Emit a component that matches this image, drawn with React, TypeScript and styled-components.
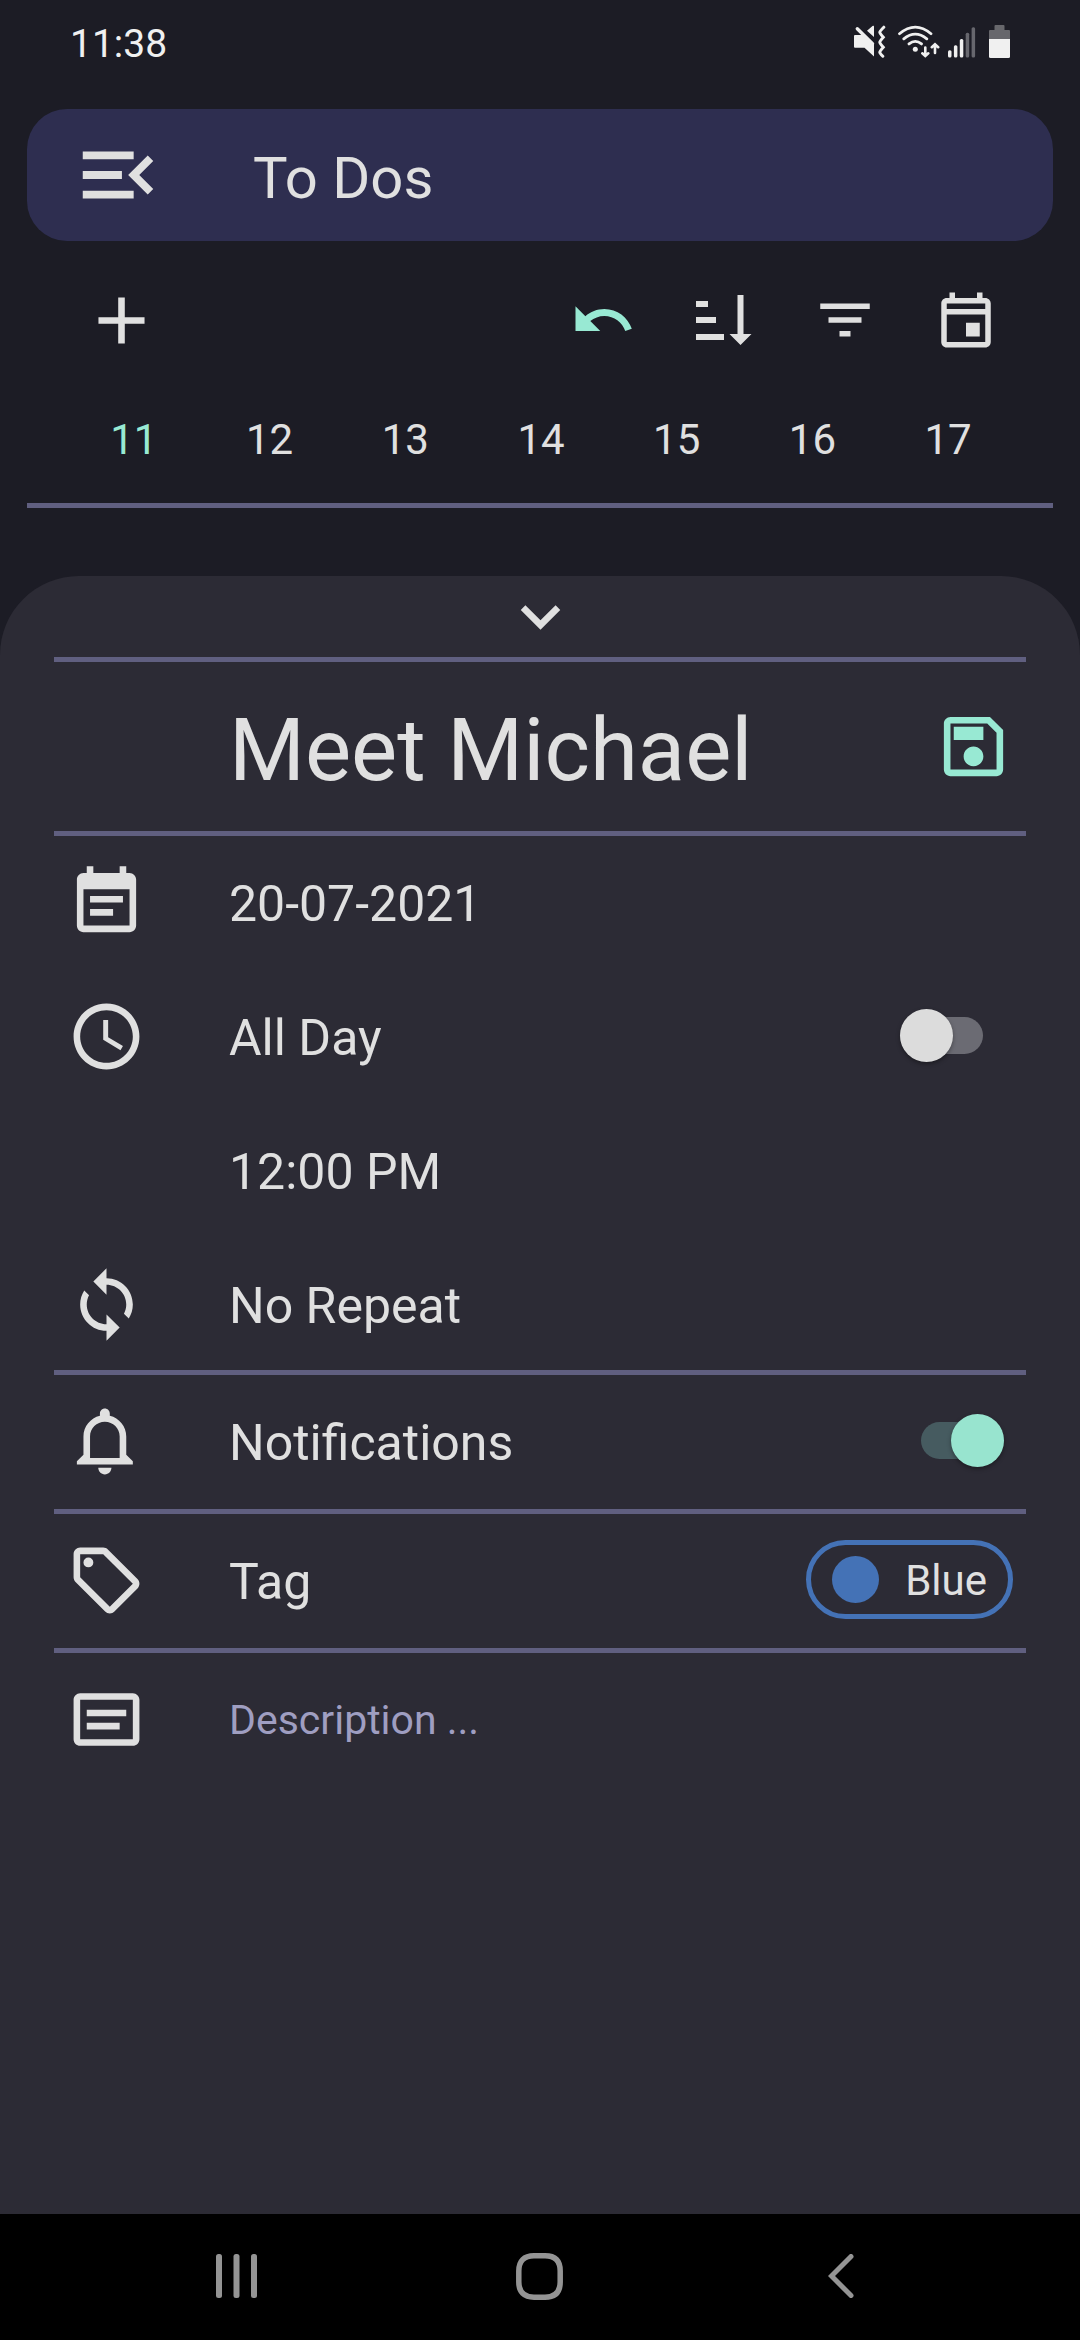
import React, { useState } from "react";
import styled, { createGlobalStyle } from "styled-components";

const color = {
  page: "#1c1c25",
  bar: "#2e2e50",
  sheet: "#2c2b35",
  line: "#605f80",
  text: "#e0e0e0",
  muted: "#9f9ec1",
  accent: "#98e9d3",
  blue: "#4472b6",
  status: "#f0f0f0",
  nav: "#949494",
};

const GlobalStyle = createGlobalStyle`
  *, *::before, *::after { box-sizing: border-box; }
  body {
    margin: 0;
    background: ${color.page};
    color: ${color.text};
    font-family: Roboto, "Noto Sans", sans-serif;
  }
  button, input { font: inherit; color: inherit; }
`;

const Page = styled.div`
  display: flex;
  flex-direction: column;
  min-height: 100vh;
`;

const StatusBar = styled.div`
  display: flex;
  align-items: center;
  justify-content: space-between;
  height: 82px;
  padding: 0 70px;
  color: ${color.status};
`;

const Clock = styled.time`
  padding-top: 6px;
  font-size: 39px;
  line-height: 48px;
`;

const StatusIcons = styled.div`
  display: flex;
  gap: 8px;
`;

const Header = styled.header`
  display: flex;
  align-items: center;
  gap: 88px;
  height: 132px;
  margin: 27px 27px 0;
  padding: 0 44px;
  border-radius: 40px;
  background: ${color.bar};
`;

const HeaderTitle = styled.h1`
  margin: 0;
  padding-top: 6px;
  font-size: 58px;
  font-weight: 400;
  line-height: 68px;
`;

const IconButton = styled.button<{ $accent?: boolean }>`
  display: flex;
  align-items: center;
  justify-content: center;
  padding: 0;
  border: 0;
  background: none;
  color: ${(p) => (p.$accent ? color.accent : color.text)};
  cursor: pointer;
`;

const Toolbar = styled.div`
  display: flex;
  justify-content: space-between;
  height: 158px;
  padding: 0 54px 0 61px;

  ${IconButton} { width: 121px; }
`;

const ToolGroup = styled.div`
  display: flex;
`;

const Days = styled.nav`
  display: grid;
  grid-template-columns: repeat(7, 1fr);
  height: 104px;
  padding: 0 64px 22px 66px;
`;

const Day = styled.button<{ $active: boolean }>`
  padding: 0;
  border: 0;
  background: none;
  color: ${(p) => (p.$active ? color.accent : color.text)};
  font-size: 42px;
  line-height: 50px;
  cursor: pointer;
`;

const Divider = styled.hr<{ $inset: number }>`
  width: auto;
  height: 5px;
  margin: 0 ${(p) => p.$inset}px;
  border: 0;
  background: ${color.line};
`;

const Sheet = styled.main`
  flex: 1;
  margin-top: 68px;
  border-radius: 79px 79px 0 0;
  background: ${color.sheet};
`;

const Collapse = styled(IconButton)`
  width: 100%;
  height: 81px;
`;

const Section = styled.section<{ $end?: number }>`
  display: grid;
  gap: 2px;
  padding: 0 67px ${(p) => p.$end ?? 0}px;
`;

const Row = styled.div<{ $tall?: boolean }>`
  display: grid;
  grid-template-columns: 79px minmax(0, 1fr) auto;
  column-gap: 83px;
  align-items: center;
  height: ${(p) => (p.$tall ? 168 : 132)}px;
`;

const TitleInput = styled.input`
  width: 100%;
  padding: 8px 0 0;
  border: 0;
  outline: 0;
  background: none;
  font-size: 87px;
  line-height: 102px;
`;

const ValueButton = styled.button`
  justify-self: start;
  padding: 3px 0 0;
  border: 0;
  background: none;
  font-size: 50px;
  line-height: 60px;
  cursor: pointer;
`;

const FieldLabel = styled.label`
  padding-top: 4px;
  font-size: 50px;
  line-height: 60px;
`;

const DescriptionInput = styled.input`
  grid-column: 2 / -1;
  width: 100%;
  padding: 2px 0 0;
  border: 0;
  outline: 0;
  background: none;
  font-size: 41px;
  line-height: 50px;

  &::placeholder { color: ${color.muted}; opacity: 1; }
`;

const Switch = styled.input<{ $gap: number }>`
  appearance: none;
  display: grid;
  align-items: center;
  width: 83px;
  height: 53px;
  margin: 0 ${(p) => p.$gap}px 2px 0;
  cursor: pointer;

  &::before, &::after {
    content: "";
    grid-area: 1 / 1;
  }
  &::before {
    height: 37px;
    border-radius: 19px;
    background: #6b6b73;
  }
  &::after {
    width: 53px;
    height: 53px;
    border-radius: 50%;
    background: #dcdcdc;
    box-shadow: 0 2px 4px rgba(0, 0, 0, 0.35);
  }
  &:checked::before { background: #465b60; }
  &:checked::after {
    justify-self: end;
    background: #98e4cf;
  }
`;

const Chip = styled.button`
  display: flex;
  align-items: center;
  gap: 26px;
  height: 79px;
  margin-bottom: 2px;
  padding: 0 21px;
  border: 5px solid ${color.blue};
  border-radius: 40px;
  background: none;
  font-size: 42px;
  line-height: 50px;
  cursor: pointer;
`;

const Dot = styled.span`
  width: 47px;
  height: 47px;
  border-radius: 50%;
  background: ${color.blue};
`;

const ChipText = styled.span`
  padding-top: 3px;
`;

const NavBar = styled.footer`
  display: grid;
  grid-template-columns: repeat(3, 1fr);
  height: 126px;
  padding: 0 88px 2px 86px;
  background: #000;

  ${IconButton} { color: ${color.nav}; }
`;

const paths = {
  menuOpen:
    "M3 18h13v-2H3v2zm0-5h10v-2H3v2zm0-7v2h13V6H3zm18 9.59L17.42 12 21 8.41 19.59 7l-5 5 5 5L21 15.59z",
  add: "M19 13h-6v6h-2v-6H5v-2h6V5h2v6h6v2z",
  undo: "M12.5 8c-2.65 0-5.05.99-6.9 2.6L2 7v9h9l-3.62-3.62c1.39-1.16 3.16-1.88 5.12-1.88 3.54 0 6.55 2.31 7.6 5.5l2.37-.78C21.08 11.03 17.15 8 12.5 8z",
  filter: "M10 18h4v-2h-4v2zM3 6v2h18V6H3zm3 7h12v-2H6v2z",
  calendar:
    "M19 4h-1V2h-2v2H8V2H6v2H5c-1.11 0-1.99.9-1.99 2L3 20c0 1.1.89 2 2 2h14c1.1 0 2-.9 2-2V6c0-1.1-.9-2-2-2zm0 16H5V10h14v10zm0-12H5V6h14v2zm-7 5h5v5h-5z",
  chevronDown: "M16.59 8.59L12 13.17 7.41 8.59 6 10l6 6 6-6z",
  save: "M17 3H5c-1.11 0-2 .9-2 2v14c0 1.1.89 2 2 2h14c1.1 0 2-.9 2-2V7l-4-4zm2 16H5V5h11.17L19 7.83V19zm-7-7c-1.66 0-3 1.34-3 3s1.34 3 3 3 3-1.34 3-3-1.34-3-3-3zM6 6h9v4H6V6z",
  eventNote:
    "M14 14H7v2h7v-2zm5-11h-1V1h-2v2H8V1H6v2H5c-1.11 0-1.99.9-1.99 2L3 19c0 1.1.89 2 2 2h14c1.1 0 2-.9 2-2V5c0-1.1-.9-2-2-2zm0 16H5V8h14v11zm-2-9H7v2h10v-2z",
  clock:
    "M11.99 2C6.47 2 2 6.48 2 12s4.47 10 9.99 10C17.52 22 22 17.52 22 12S17.52 2 11.99 2zM12 20c-4.42 0-8-3.58-8-8s3.58-8 8-8 8 3.58 8 8-3.58 8-8 8zm.5-13H11v6l5.25 3.15.75-1.23-4.5-2.67z",
  sync: "M12 4V1L8 5l4 4V6c3.31 0 6 2.69 6 6 0 1.01-.25 1.97-.7 2.8l1.46 1.46C19.54 15.03 20 13.57 20 12c0-4.42-3.58-8-8-8zm0 14c-3.31 0-6-2.69-6-6 0-1.01.25-1.97.7-2.8L5.24 7.74C4.46 8.97 4 10.43 4 12c0 4.42 3.58 8 8 8v3l4-4-4-4v3z",
  bell: "M11.5 22c1.1 0 2-.9 2-2h-4c0 1.1.9 2 2 2zm6.5-6v-5.5c0-3.07-2.13-5.64-5-6.32V3.500c0-.83-.67-1.5-1.5-1.5S10 2.67 10 3.5v.68c-2.87.68-5 3.25-5 6.32V16l-2 2v1h17v-1l-2-2zm-2 1H7v-6.5C7 8.01 9.01 6 11.5 6S16 8.01 16 10.5V17z",
  tag: "M21.41 11.58l-9-9C12.05 2.22 11.55 2 11 2H4c-1.1 0-2 .9-2 2v7c0 .55.22 1.05.59 1.42l9 9c.36.36.86.58 1.41.58s1.05-.22 1.41-.59l7-7c.37-.36.59-.86.59-1.41s-.23-1.06-.59-1.42zM13 20.01L4 11V4h7v-.01l9 9-7 7.02zM6.5 5a1.5 1.5 0 1 0 0 3 1.5 1.5 0 1 0 0-3z",
  note: "M20 4H4c-1.1 0-2 .9-2 2v12c0 1.1.9 2 2 2h16c1.1 0 2-.9 2-2V6c0-1.1-.9-2-2-2zm0 14H4V6h16v12zM6 9h12v2H6zm0 4h10v2H6z",
};

function Icon({ name, size = 79 }: { name: keyof typeof paths; size?: number }) {
  return (
    <svg width={size} height={size} viewBox="0 0 24 24" fill="currentColor" fillRule="evenodd" aria-hidden="true">
      <path d={paths[name]} />
    </svg>
  );
}

const SortIcon = () => (
  <svg width="56" height="50" viewBox="0 0 56 50" fill="currentColor" aria-hidden="true">
    <path d="M0 6h12v6H0zM0 22h20v6H0zM0 39h28v6H0zM41.5 0h6v39h8L44.5 50 33.5 39h8z" />
  </svg>
);

const MuteIcon = () => (
  <svg width="36" height="33" viewBox="0 0 36 33" fill="currentColor" aria-hidden="true">
    <path d="M1 10h8l11 8.5v13L10.5 22.8H1a1 1 0 0 1-1-1V11a1 1 0 0 1 1-1zM13 5.700L18.500 1a.9.900 0 0 1 1.500.700V12z" />
    <path d="M3.300 3.800L18.500 18.700" stroke="currentColor" strokeWidth="3.400" strokeLinecap="round" />
    <path
      d="M29.800 2.200q-4 4-4 5t3.500 5q-3.500 4-3.500 5t3.500 5q-3.500 4-3.500 5t3 4"
      fill="none"
      stroke="currentColor"
      strokeWidth="3"
      strokeLinecap="round"
    />
  </svg>
);

const WifiIcon = () => (
  <svg
    width="42"
    height="33"
    viewBox="0 0 42 33"
    fill="none"
    stroke="currentColor"
    strokeWidth="2.800"
    strokeLinecap="round"
    aria-hidden="true"
  >
    <path d="M1.500 8.700Q17.300-4.500 33 8.700M5.800 13.800Q17.300 4.500 28.800 13.800M11 18.900Q17.300 13.800 23.500 18.900" />
    <circle cx="17.300" cy="24.300" r="2.500" fill="currentColor" stroke="none" />
    <path d="M27.300 22.500v8M24.300 28.300l3 2.700 3-2.700M37 28v-7.500M33.800 22.200L37 19.300l3.200 2.900" strokeWidth="2.600" />
  </svg>
);

const SignalIcon = () => (
  <svg width="33" height="33" viewBox="0 0 33 33" aria-hidden="true">
    {[25.3, 20.3, 14, 7.7, 2.3].map((top, i) => (
      <rect
        key={top}
        x={i * 5.9}
        y={top}
        width="3.500"
        height={32.5 - top}
        rx="1.500"
        fill={i < 3 ? color.status : "#67676e"}
      />
    ))}
  </svg>
);

const BatteryIcon = () => (
  <svg width="21" height="33" viewBox="0 0 21 33" aria-hidden="true">
    <path d="M6.500 0h8a1 1 0 0 1 1 1v4H20a1 1 0 0 1 1 1v9H0V6a1 1 0 0 1 1-1h4.500V1a1 1 0 0 1 1-1z" fill="#67676c" />
    <path d="M0 14h21v17.500a1.500 1.500 0 0 1-1.500 1.500h-18A1.500 1.500 0 0 1 0 31.500z" fill={color.status} />
  </svg>
);

const RecentsIcon = () => (
  <svg width="42" height="44" viewBox="0 0 42 44" fill="currentColor" aria-hidden="true">
    <rect x="0" width="6" height="44" rx="2.500" />
    <rect x="17.500" width="6" height="44" rx="2.500" />
    <rect x="35" width="6" height="44" rx="2.500" />
  </svg>
);

const HomeIcon = () => (
  <svg width="47" height="47" viewBox="0 0 47 47" fill="none" stroke="currentColor" strokeWidth="5.500" aria-hidden="true">
    <path d="M18 2.800h11C39 2.800 44.200 8 44.200 18v11c0 10-5.200 15.200-15.200 15.200H18C8 44.200 2.800 39 2.800 29V18C2.800 8 8 2.800 18 2.800z" />
  </svg>
);

const BackIcon = () => (
  <svg
    width="26"
    height="44"
    viewBox="0 0 26 44"
    fill="none"
    stroke="currentColor"
    strokeWidth="5"
    strokeLinecap="round"
    aria-hidden="true"
  >
    <path d="M23 2.500L3.500 22 23 41.500" />
  </svg>
);

const dates = [11, 12, 13, 14, 15, 16, 17];

export default function App() {
  const [day, setDay] = useState(11);
  const [title, setTitle] = useState("Meet Michael");
  const [description, setDescription] = useState("");

  return (
    <Page>
      <GlobalStyle />
      <StatusBar>
        <Clock>11:38</Clock>
        <StatusIcons>
          <MuteIcon />
          <WifiIcon />
          <SignalIcon />
          <BatteryIcon />
        </StatusIcons>
      </StatusBar>

      <Header>
        <IconButton aria-label="Menu">
          <Icon name="menuOpen" size={94} />
        </IconButton>
        <HeaderTitle>To Dos</HeaderTitle>
      </Header>

      <Toolbar>
        <IconButton aria-label="Add">
          <Icon name="add" />
        </IconButton>
        <ToolGroup>
          <IconButton aria-label="Undo" $accent>
            <Icon name="undo" size={66} />
          </IconButton>
          <IconButton aria-label="Sort">
            <SortIcon />
          </IconButton>
          <IconButton aria-label="Filter">
            <Icon name="filter" size={66} />
          </IconButton>
          <IconButton aria-label="Calendar">
            <Icon name="calendar" size={66} />
          </IconButton>
        </ToolGroup>
      </Toolbar>

      <Days>
        {dates.map((d) => (
          <Day key={d} $active={d === day} onClick={() => setDay(d)}>
            {d}
          </Day>
        ))}
      </Days>
      <Divider $inset={27} />

      <Sheet>
        <Collapse aria-label="Close">
          <Icon name="chevronDown" />
        </Collapse>
        <Divider $inset={54} />

        <Section $end={1}>
          <Row $tall>
            <span />
            <TitleInput aria-label="Title" value={title} onChange={(e) => setTitle(e.target.value)} />
            <IconButton aria-label="Save" $accent>
              <Icon name="save" />
            </IconButton>
          </Row>
        </Section>
        <Divider $inset={54} />

        <Section>
          <Row>
            <Icon name="eventNote" />
            <ValueButton>20-07-2021</ValueButton>
          </Row>
          <Row>
            <Icon name="clock" />
            <FieldLabel htmlFor="all-day">All Day</FieldLabel>
            <Switch id="all-day" type="checkbox" $gap={30} />
          </Row>
          <Row>
            <span />
            <ValueButton>12:00 PM</ValueButton>
          </Row>
          <Row>
            <Icon name="sync" />
            <ValueButton>No Repeat</ValueButton>
          </Row>
        </Section>
        <Divider $inset={54} />

        <Section $end={2}>
          <Row>
            <Icon name="bell" />
            <FieldLabel htmlFor="notifications">Notifications</FieldLabel>
            <Switch id="notifications" type="checkbox" defaultChecked $gap={9} />
          </Row>
        </Section>
        <Divider $inset={54} />

        <Section $end={2}>
          <Row>
            <Icon name="tag" />
            <FieldLabel htmlFor="tag">Tag</FieldLabel>
            <Chip id="tag">
              <Dot />
              <ChipText>Blue</ChipText>
            </Chip>
          </Row>
        </Section>
        <Divider $inset={54} />

        <Section>
          <Row>
            <Icon name="note" />
            <DescriptionInput
              aria-label="Description"
              placeholder="Description ..."
              value={description}
              onChange={(e) => setDescription(e.target.value)}
            />
          </Row>
        </Section>
      </Sheet>

      <NavBar>
        <IconButton aria-label="Recent apps">
          <RecentsIcon />
        </IconButton>
        <IconButton aria-label="Home">
          <HomeIcon />
        </IconButton>
        <IconButton aria-label="Back">
          <BackIcon />
        </IconButton>
      </NavBar>
    </Page>
  );
}
